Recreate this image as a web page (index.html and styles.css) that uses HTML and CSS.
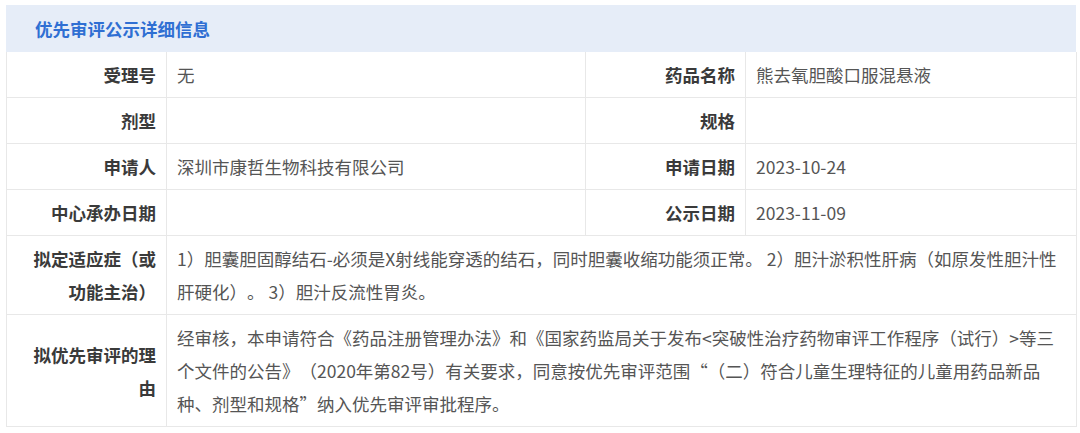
FILE: index.html
```html
<!DOCTYPE html>
<html lang="zh-CN">
<head>
<meta charset="utf-8">
<title>优先审评公示详细信息</title>
<link rel="stylesheet" href="styles.css">
</head>
<body>
<div class="panel">
  <div class="panel-head">优先审评公示详细信息</div>
  <table class="info">
    <colgroup>
      <col class="c-label"><col class="c-val1"><col class="c-label"><col class="c-val2">
    </colgroup>
    <tr>
      <th>受理号</th><td>无</td>
      <th>药品名称</th><td>熊去氧胆酸口服混悬液</td>
    </tr>
    <tr>
      <th>剂型</th><td></td>
      <th>规格</th><td></td>
    </tr>
    <tr>
      <th>申请人</th><td>深圳市康哲生物科技有限公司</td>
      <th>申请日期</th><td>2023-10-24</td>
    </tr>
    <tr>
      <th>中心承办日期</th><td></td>
      <th>公示日期</th><td>2023-11-09</td>
    </tr>
    <tr>
      <th>拟定适应症（或功能主治）</th>
      <td colspan="3">1）胆囊胆固醇结石-必须是X射线能穿透的结石，同时胆囊收缩功能须正常。 2）胆汁淤积性肝病（如原发性胆汁性肝硬化）。 3）胆汁反流性胃炎。</td>
    </tr>
    <tr>
      <th>拟优先审评的理由</th>
      <td colspan="3">经审核，本申请符合《药品注册管理办法》和《国家药监局关于发布&lt;突破性治疗药物审评工作程序（试行）&gt;等三个文件的公告》（2020年第82号）有关要求，同意按优先审评范围“（二）符合儿童生理特征的儿童用药品新品种、剂型和规格”纳入优先审评审批程序。</td>
    </tr>
  </table>
</div>
</body>
</html>
```

FILE: styles.css
```css
html, body {
  margin: 0;
  padding: 0;
  background: #ffffff;
}
body {
  padding: 5px 0 0 6px;
  font-family: "Noto Sans CJK SC", "Noto Sans", sans-serif;
  text-spacing-trim: space-all;
}
.panel {
  width: 1070px;
}
.panel-head {
  height: 47px;
  box-sizing: border-box;
  padding-left: 29px;
  background: #e6edf8;
  color: #2f6fd3;
  font-size: 17.5px;
  font-weight: bold;
  line-height: 47px;
}
.info {
  width: 1070px;
  border-collapse: collapse;
  table-layout: fixed;
  font-size: 17.5px;
  line-height: 33px;
}
.c-label { width: 160px; }
.c-val1 { width: 419px; }
.c-val2 { width: 331px; }
.info th, .info td {
  border: 1px solid #e8e8e8;
  padding: 6px 10px;
  vertical-align: middle;
}
.info tr:first-child th, .info tr:first-child td {
  border-top: none;
}
.info th {
  text-align: right;
  font-weight: bold;
  color: #3a3a3a;
  padding-left: 14px;
}
.info td {
  text-align: left;
  color: #555555;
  height: 33px;
}
```
